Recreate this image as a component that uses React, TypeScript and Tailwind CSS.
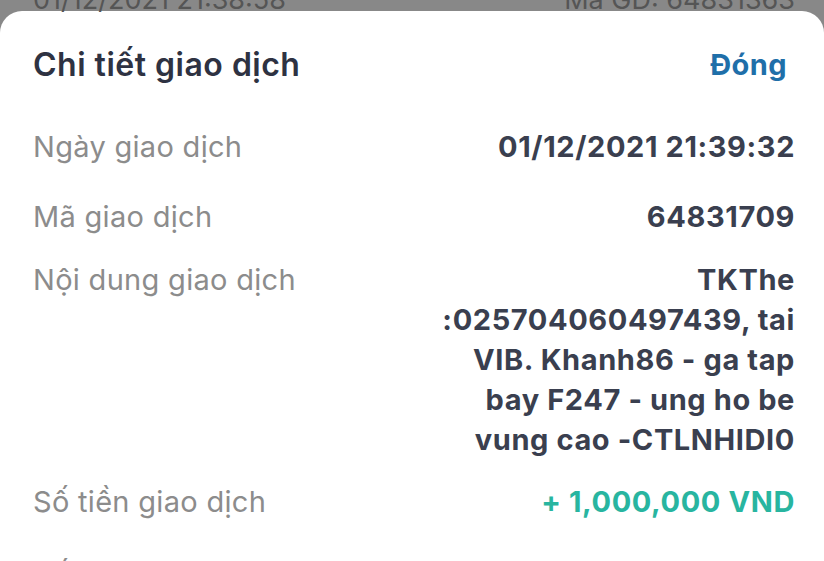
const rows = [
  { label: 'Ngày giao dịch', value: '01/12/2021 21:39:32', gap: 'mt-0' },
  { label: 'Mã giao dịch', value: '64831709', gap: 'mt-[30px]' },
  {
    label: 'Nội dung giao dịch',
    value: 'TKThe :025704060497439, tai VIB. Khanh86 - ga tap bay F247 - ung ho be vung cao -CTLNHIDI0',
    gap: 'mt-[23px]',
  },
];

export default function App() {
  return (
    <main
      className="w-[824px] h-[561px] overflow-hidden bg-[#888888] flex flex-col"
      style={{ fontFamily: 'Inter, "Open Sans", sans-serif' }}
    >
      <div className="h-[11px] shrink-0 relative text-[27px] text-[#555555] leading-none">
        <span className="absolute left-[33px] bottom-[-2px]">01/12/2021 21:38:58</span>
        <span className="absolute right-[29px] bottom-[-2px]">Mã GD: 64831363</span>
      </div>

      <section className="flex-grow bg-white rounded-t-[22px] px-[29px] pt-[31px]">
        <div className="flex justify-between items-center h-[46px] pl-[4px]">
          <h1 className="text-[32px] font-semibold text-[#2e3242] tracking-[0.5px]">Chi tiết giao dịch</h1>
          <button className="text-[29px] font-bold text-[#1f6fa9] tracking-[0.4px] mr-[8px]">Đóng</button>
        </div>

        <div className="flex flex-col mt-[39px] pl-[4px]">
          {rows.map((row) => (
            <div key={row.label} className={`flex justify-between gap-8 ${row.gap}`}>
              <span className="text-[29px] leading-[40px] text-[#8c8c8c] tracking-[0.3px] whitespace-nowrap">
                {row.label}
              </span>
              <span className="text-[29px] leading-[40px] font-bold text-[#3a3f4f] tracking-[0.6px] text-right max-w-[360px]">
                {row.value}
              </span>
            </div>
          ))}
          <div className="flex justify-between mt-[22px]">
            <span className="text-[29px] leading-[40px] text-[#8c8c8c] tracking-[0.3px]">Số tiền giao dịch</span>
            <span className="text-[29px] leading-[40px] font-bold text-[#28b5a0] tracking-[0.6px]">
              + 1,000,000 VND
            </span>
          </div>
          <div className="flex justify-between mt-[33px]">
            <span className="text-[29px] leading-[40px] text-[#8c8c8c] tracking-[0.3px]">Số dư</span>
            <span className="text-[29px] leading-[40px] font-bold text-[#3a3f4f] tracking-[0.6px]">1,000,000 VND</span>
          </div>
        </div>
      </section>
    </main>
  );
}
